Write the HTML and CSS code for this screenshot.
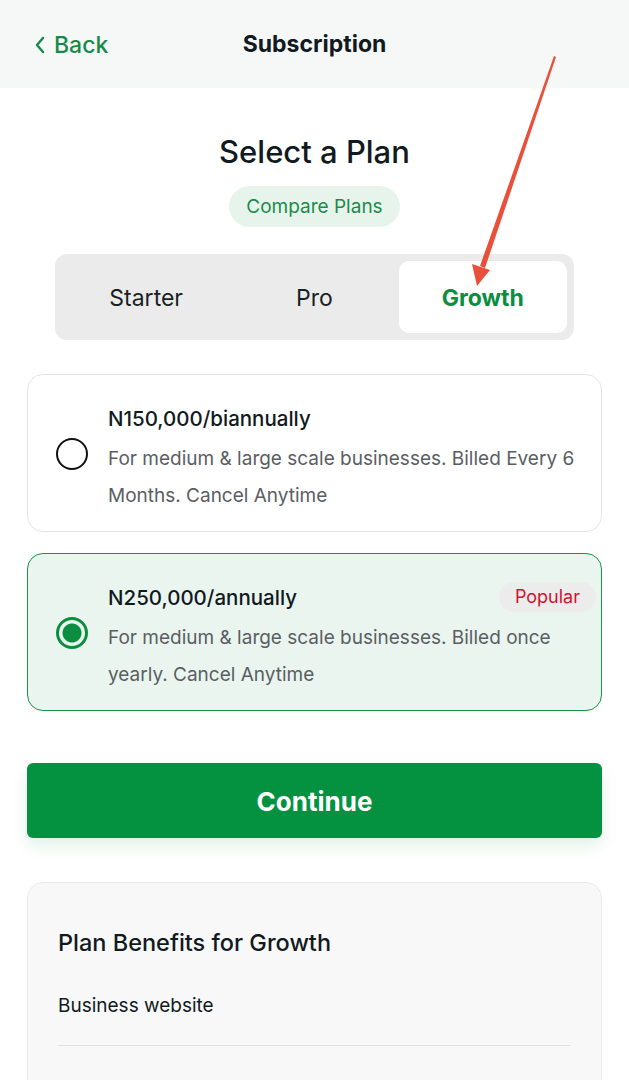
FILE: index.html
```html
<!DOCTYPE html>
<html lang="en">
<head>
  <meta charset="UTF-8" />
  <title>Subscription</title>
  <meta name="viewport" content="width=device-width, initial-scale=1.0" />
  <link rel="stylesheet" href="styles.css">
</head>
<body>

  <!-- Top bar -->
  <header class="topbar">
    <a class="back-link" href="#">
      <svg width="12" height="18" viewBox="0 0 12 18"><path d="M9 2 L3 9 L9 16" fill="none" stroke="currentColor" stroke-width="2.4" stroke-linecap="round" stroke-linejoin="round"/></svg>
      Back
    </a>
    <h1 class="topbar-title">Subscription</h1>
  </header>

  <main class="page">
    <h2 class="page-title">Select a Plan</h2>
    <button class="compare-btn">Compare Plans</button>

    <div class="tabs">
      <div class="tab">Starter</div>
      <div class="tab">Pro</div>
      <div class="tab active">Growth</div>
    </div>

    <div class="plan-list">
      <label class="plan">
        <span class="radio"></span>
        <div class="plan-info">
          <div class="plan-price">N150,000/biannually</div>
          <p class="plan-desc">For medium &amp; large scale businesses. Billed Every 6 Months. Cancel Anytime</p>
        </div>
      </label>

      <label class="plan selected">
        <span class="radio"></span>
        <div class="plan-info">
          <div class="plan-price">N250,000/annually</div>
          <p class="plan-desc">For medium &amp; large scale businesses. Billed once yearly. Cancel Anytime</p>
        </div>
        <span class="badge">Popular</span>
      </label>
    </div>

    <button class="continue-btn">Continue</button>

    <section class="benefits">
      <h3>Plan Benefits for Growth</h3>
      <ul class="benefit-list">
        <li>Business website</li>
        <li>&nbsp;</li>
      </ul>
    </section>
  </main>

  <!-- annotation arrow -->
  <svg class="annotation" width="629" height="300" viewBox="0 0 629 300">
    <path d="M554 56 L556 57 L485 268 L480 266 Z" fill="#e8503a"/>
    <path d="M472 264 L490 270 L477 286 Z" fill="#e8503a"/>
  </svg>

</body>
</html>
```

FILE: styles.css
```css
html, body {
  margin: 0;
  padding: 0;
  background: #fff;
  font-family: Inter, "Noto Sans", sans-serif;
  color: #121a21;
}

body {
  position: relative;
  width: 629px;
  overflow: hidden;
}

.topbar {
  height: 88px;
  background: #f6f7f7;
  display: flex;
  align-items: center;
  justify-content: center;
  position: relative;
}

.back-link {
  position: absolute;
  left: 34px;
  top: 31px;
  display: flex;
  align-items: center;
  gap: 8px;
  color: #168a48;
  text-decoration: none;
  font-size: 23px;
  font-weight: 500;
}

.topbar-title {
  margin: 0;
  font-size: 23px;
  font-weight: 700;
  color: #121a21;
}

.page {
  padding: 0 27px 0;
  display: flex;
  flex-direction: column;
  align-items: center;
}

.page-title {
  margin: 44px 0 0;
  font-size: 31px;
  font-weight: 500;
  line-height: 40px;
}

.compare-btn {
  margin-top: 14px;
  border: none;
  background: #e7f4ec;
  color: #1b8b4b;
  font-family: inherit;
  font-size: 19px;
  padding: 0 17px;
  height: 41px;
  border-radius: 21px;
}

.tabs {
  margin-top: 27px;
  width: 519px;
  height: 86px;
  box-sizing: border-box;
  padding: 7px;
  background: #ebebeb;
  border-radius: 12px;
  display: grid;
  grid-template-columns: repeat(3, 1fr);
}

.tab {
  display: flex;
  align-items: center;
  justify-content: center;
  font-size: 23px;
  color: #1a1f24;
  border-radius: 10px;
  padding-top: 2px;
}

.tab.active {
  background: #fff;
  color: #0b8e40;
  font-weight: 700;
}

.plan-list {
  width: 100%;
  margin-top: 34px;
  display: flex;
  flex-direction: column;
  gap: 21px;
}

.plan {
  position: relative;
  display: flex;
  align-items: center;
  gap: 20px;
  box-sizing: border-box;
  height: 158px;
  padding: 0 26px 0 28px;
  border: 1.5px solid #e4e4e4;
  border-radius: 16px;
  background: #fff;
}

.plan.selected {
  border-color: #179545;
  background: #eaf5ef;
}

.radio {
  flex: none;
  width: 32px;
  height: 32px;
  box-sizing: border-box;
  border: 2.5px solid #111;
  border-radius: 50%;
  margin-top: 2px;
}

.plan.selected .radio {
  border-color: #0b8e40;
  border-width: 3px;
  background: radial-gradient(circle, #0b8e40 0 9px, transparent 10px);
}

.plan-info {
  flex: 1;
  padding-top: 13px;
}

.plan-price {
  font-size: 20.5px;
  font-weight: 500;
  line-height: 26px;
  margin-bottom: 8px;
}

.plan-desc {
  margin: 0;
  font-size: 19px;
  line-height: 37px;
  color: #5a5e63;
}

.badge {
  position: absolute;
  right: 5px;
  top: 28px;
  background: #ececec;
  color: #d3132e;
  font-size: 18px;
  padding: 0 16px;
  height: 30px;
  line-height: 30px;
  border-radius: 15px;
}

.continue-btn {
  margin-top: 52px;
  width: 100%;
  height: 75px;
  border: none;
  border-radius: 6px;
  background: #049241;
  color: #fff;
  font-family: inherit;
  font-size: 26px;
  font-weight: 700;
  padding-top: 3px;
  box-shadow: 0 8px 16px rgba(4, 146, 65, 0.12);
}

.benefits {
  margin-top: 44px;
  width: 100%;
  box-sizing: border-box;
  background: #f8f8f8;
  border: 1.5px solid #ebebeb;
  border-radius: 16px;
  padding: 45px 30px 40px;
}

.benefits h3 {
  margin: 0;
  font-size: 23.5px;
  font-weight: 500;
  line-height: 30px;
}

.benefit-list {
  list-style: none;
  margin: 20px 0 0;
  padding: 0;
}

.benefit-list li {
  font-size: 19px;
  line-height: 24px;
  padding: 16px 0 27px;
  border-bottom: 1.5px solid #e2e2e2;
}

.annotation {
  position: absolute;
  left: 0;
  top: 0;
  pointer-events: none;
}
```
